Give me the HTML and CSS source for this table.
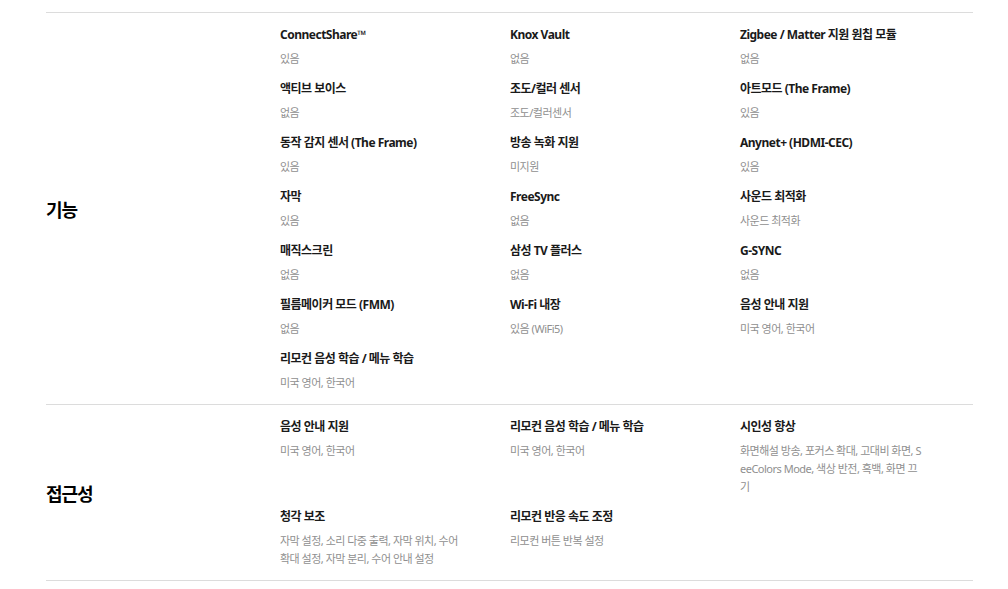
FILE: index.html
```html
<!DOCTYPE html>
<html lang="ko">
<head>
    <meta charset="UTF-8">
    <meta name="viewport" content="width=device-width, initial-scale=1.0">
    <title>사양</title>
    <link rel="stylesheet" href="styles.css">
</head>
<body>
    <div class="spec-list">

        <!-- 기능 -->
        <div class="spec-group">
            <h3 class="spec-label">기능</h3>
            <div class="spec-grid">
                <div class="spec-item"><p class="spec-name">ConnectShare™</p><p class="spec-value">있음</p></div>
                <div class="spec-item"><p class="spec-name">Knox Vault</p><p class="spec-value">없음</p></div>
                <div class="spec-item"><p class="spec-name">Zigbee / Matter 지원 원칩 모듈</p><p class="spec-value">없음</p></div>

                <div class="spec-item"><p class="spec-name">액티브 보이스</p><p class="spec-value">없음</p></div>
                <div class="spec-item"><p class="spec-name">조도/컬러 센서</p><p class="spec-value">조도/컬러센서</p></div>
                <div class="spec-item"><p class="spec-name">아트모드 (The Frame)</p><p class="spec-value">있음</p></div>

                <div class="spec-item"><p class="spec-name">동작 감지 센서 (The Frame)</p><p class="spec-value">있음</p></div>
                <div class="spec-item"><p class="spec-name">방송 녹화 지원</p><p class="spec-value">미지원</p></div>
                <div class="spec-item"><p class="spec-name">Anynet+ (HDMI-CEC)</p><p class="spec-value">있음</p></div>

                <div class="spec-item"><p class="spec-name">자막</p><p class="spec-value">있음</p></div>
                <div class="spec-item"><p class="spec-name">FreeSync</p><p class="spec-value">없음</p></div>
                <div class="spec-item"><p class="spec-name">사운드 최적화</p><p class="spec-value">사운드 최적화</p></div>

                <div class="spec-item"><p class="spec-name">매직스크린</p><p class="spec-value">없음</p></div>
                <div class="spec-item"><p class="spec-name">삼성 TV 플러스</p><p class="spec-value">없음</p></div>
                <div class="spec-item"><p class="spec-name">G-SYNC</p><p class="spec-value">없음</p></div>

                <div class="spec-item"><p class="spec-name">필름메이커 모드 (FMM)</p><p class="spec-value">없음</p></div>
                <div class="spec-item"><p class="spec-name">Wi-Fi 내장</p><p class="spec-value">있음 (WiFi5)</p></div>
                <div class="spec-item"><p class="spec-name">음성 안내 지원</p><p class="spec-value">미국 영어, 한국어</p></div>

                <div class="spec-item"><p class="spec-name">리모컨 음성 학습 / 메뉴 학습</p><p class="spec-value">미국 영어, 한국어</p></div>
            </div>
        </div>

        <!-- 접근성 -->
        <div class="spec-group">
            <h3 class="spec-label">접근성</h3>
            <div class="spec-grid">
                <div class="spec-item"><p class="spec-name">음성 안내 지원</p><p class="spec-value">미국 영어, 한국어</p></div>
                <div class="spec-item"><p class="spec-name">리모컨 음성 학습 / 메뉴 학습</p><p class="spec-value">미국 영어, 한국어</p></div>
                <div class="spec-item"><p class="spec-name">시인성 향상</p><p class="spec-value">화면해설 방송, 포커스 확대, 고대비 화면, SeeColors Mode, 색상 반전, 흑백, 화면 끄기</p></div>

                <div class="spec-item"><p class="spec-name">청각 보조</p><p class="spec-value">자막 설정, 소리 다중 출력, 자막 위치, 수어 확대 설정, 자막 분리, 수어 안내 설정</p></div>
                <div class="spec-item"><p class="spec-name">리모컨 반응 속도 조정</p><p class="spec-value">리모컨 버튼 반복 설정</p></div>
            </div>
        </div>

    </div>
</body>
</html>
```

FILE: styles.css
```css
body {
    margin: 0;
    background-color: white;
    color: #1a1a1a;
    font-family: "Noto Sans", "Noto Sans CJK KR", sans-serif;
}
.spec-list {
    width: 927px;
    margin: 12px 0 0 46px;
    border-bottom: 1px solid #dcdcdc;
}
/* One block per category */
.spec-group {
    display: flex;
    align-items: center;
    padding: 13px 0 12px;
    border-top: 1px solid #dcdcdc;
}
.spec-label {
    width: 234px;
    flex-shrink: 0;
    margin: 0;
    font-size: 18px;
    font-weight: 700;
    letter-spacing: -1px;
    color: #000;
}
.spec-grid {
    display: grid;
    grid-template-columns: repeat(3, 230px);
    row-gap: 12px;
}
.spec-item {
    padding-right: 46px;
}
.spec-name {
    margin: 0 0 6px;
    font-size: 12px;
    line-height: 18px;
    font-weight: 700;
    letter-spacing: -0.5px;
}
.spec-value {
    margin: 0;
    font-size: 11px;
    line-height: 18px;
    color: #8f8f8f;
    letter-spacing: -0.5px;
    word-break: break-all;
}
```
